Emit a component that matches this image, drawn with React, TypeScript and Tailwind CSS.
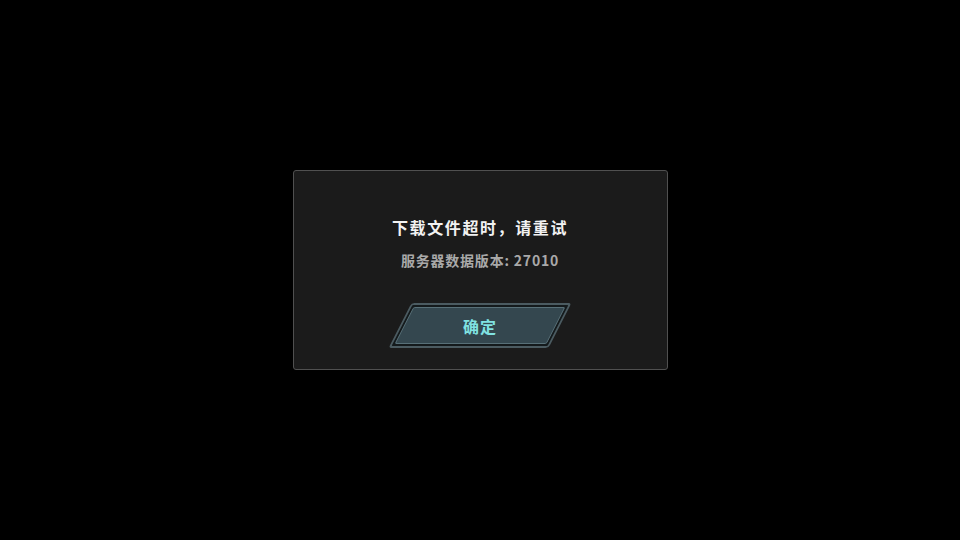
import React from "react";

export default function App() {
  return (
    <div
      className="w-screen h-screen bg-black flex items-center justify-center"
      style={{ fontFamily: '"Noto Sans CJK SC", "Noto Sans", sans-serif' }}
    >
      <div className="w-[375px] h-[200px] bg-[#1b1b1b] border border-[#505050] rounded-[3px] flex flex-col items-center pt-[45px]">
        <div className="text-[16px] leading-[22px] font-bold text-[#f2f2f2] tracking-[1.6px]">
          下载文件超时，请重试
        </div>
        <div className="mt-[12px] text-[14px] leading-[20px] font-bold text-[#a9a9a9] tracking-[0.8px]">
          服务器数据版本: 27010
        </div>
        <button className="mt-[33px] relative w-[160px] h-[45px] flex items-center justify-center">
          <div className="absolute inset-0 -skew-x-[27deg] rounded-[3px] border-2 border-[#4b5b61] bg-[#141a1c] p-[2px]">
            <div className="w-full h-full rounded-[2px] bg-[#34474f] border border-[#587078]" />
          </div>
          <span className="relative text-[16px] font-bold text-[#80e2e2] tracking-[1px]">确定</span>
        </button>
      </div>
    </div>
  );
}
